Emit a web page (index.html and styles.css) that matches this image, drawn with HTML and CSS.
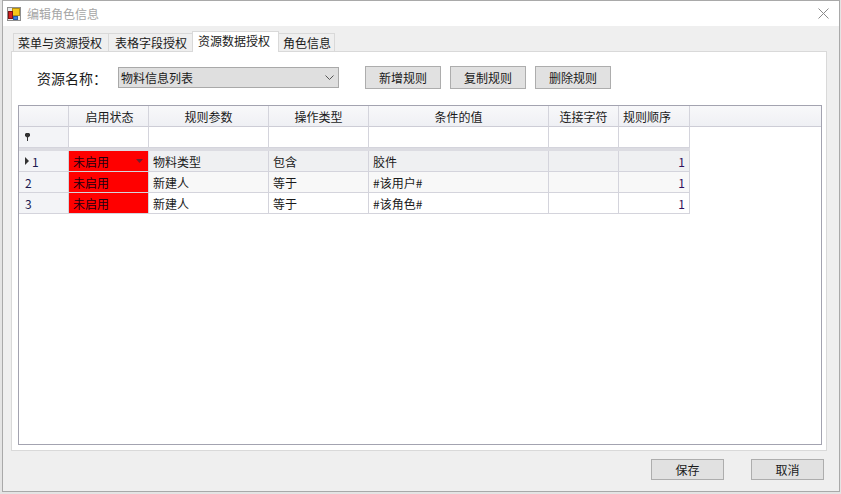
FILE: index.html
```html
<!DOCTYPE html>
<html lang="zh-CN">
<head>
<meta charset="utf-8">
<title>编辑角色信息</title>
<link rel="stylesheet" href="styles.css">
</head>
<body>
<div class="window">
  <header class="titlebar">
    <svg class="app-icon" width="14" height="14" viewBox="0 0 14 14">
      <rect x="0.5" y="0.5" width="13" height="13" fill="#e8e8e8" stroke="#8e8e8e"/>
      <rect x="5.5" y="1.5" width="7" height="7" fill="#f7c61a" stroke="#b48f10"/>
      <rect x="1.5" y="4.5" width="4" height="7" fill="#d62020" stroke="#7c1414"/>
      <rect x="6.5" y="9.5" width="4" height="3" fill="#3b7de0" stroke="#2a5aa8"/>
    </svg>
    <span class="title">编辑角色信息</span>
    <svg class="close" width="11" height="11" viewBox="0 0 11 11"><path d="M0.5 0.5L10.5 10.5M10.5 0.5L0.5 10.5" stroke="#8a8a8a" fill="none"/></svg>
  </header>
  <main class="client">
    <nav class="tabs">
      <span class="tab first">菜单与资源授权</span>
      <span class="tab second">表格字段授权</span>
      <span class="tab active">资源数据授权</span>
      <span class="tab last">角色信息</span>
    </nav>
    <section class="panel">
      <div class="toolbar">
        <label class="res-label">资源名称：</label>
        <div class="combo"><span>物料信息列表</span>
          <svg width="9" height="6" viewBox="0 0 9 6"><path d="M0.5 0.5L4.5 4.5L8.5 0.5" stroke="#555" fill="none"/></svg>
        </div>
        <button class="btn rule">新增规则</button>
        <button class="btn rule">复制规则</button>
        <button class="btn rule">删除规则</button>
      </div>
      <div class="grid">
        <div class="row head">
          <div class="c c0"></div><div class="c c1">启用状态</div><div class="c c2">规则参数</div><div class="c c3">操作类型</div><div class="c c4">条件的值</div><div class="c c5">连接字符</div><div class="c c6 h-left">规则顺序</div><div class="c rest"></div>
        </div>
        <div class="row filter">
          <div class="c c0"><svg width="5" height="8" viewBox="0 0 5 8"><path d="M1 0H4L5 1V3L3 4.5V8H2V4.5L0 3V1Z" fill="#333"/></svg></div><div class="c c1"></div><div class="c c2"></div><div class="c c3"></div><div class="c c4"></div><div class="c c5"></div><div class="c c6"></div>
        </div>
        <div class="row data current">
          <div class="c c0"><svg width="4" height="8" viewBox="0 0 4 8"><path d="M0 0L4 4L0 8Z" fill="#333"/></svg><span>1</span></div><div class="c c1 off">未启用<svg width="7" height="4" viewBox="0 0 7 4"><path d="M0 0H7L3.5 4Z" fill="#6a2030"/></svg></div><div class="c c2">物料类型</div><div class="c c3">包含</div><div class="c c4">胶件</div><div class="c c5"></div><div class="c c6 num">1</div>
        </div>
        <div class="row data alt">
          <div class="c c0"><span>2</span></div><div class="c c1 off">未启用</div><div class="c c2">新建人</div><div class="c c3">等于</div><div class="c c4">#该用户#</div><div class="c c5"></div><div class="c c6 num">1</div>
        </div>
        <div class="row data">
          <div class="c c0"><span>3</span></div><div class="c c1 off">未启用</div><div class="c c2">新建人</div><div class="c c3">等于</div><div class="c c4">#该角色#</div><div class="c c5"></div><div class="c c6 num">1</div>
        </div>
      </div>
    </section>
    <footer class="footer">
      <button class="btn act">保存</button>
      <button class="btn act">取消</button>
    </footer>
  </main>
</div>
</body>
</html>
```
FILE: styles.css
```css
* { box-sizing: border-box; }
html, body { margin: 0; padding: 0; }
body {
  width: 841px; height: 494px; background: #e4e4e4; overflow: hidden;
  font-family: "Noto Sans CJK SC", "Liberation Sans", sans-serif;
  font-size: 12px; color: #1a1a1a;
}
.window {
  width: 838px; height: 492px; margin-left: 2px;
  border: 1px solid #a9a9a9; display: flex; flex-direction: column; background: #efefef;
}
.titlebar { height: 25px; background: #fff; display: flex; align-items: center; padding: 0 10px 0 4px; flex: none; }
.app-icon { flex: none; }
.title { margin-left: 6px; color: #a6a6a6; font-size: 12px; flex: 1; }
.client { flex: 1; display: flex; flex-direction: column; padding: 5px 12px 0 8px; min-height: 0; }
.tabs { display: flex; height: 20px; align-items: flex-end; flex: none; padding-left: 2px; }
.tab {
  height: 18px; padding: 0 5px; line-height: 17px; background: #efefef;
  border: 1px solid #d9d9d9; border-bottom: 0; margin-right: -1px; white-space: nowrap;
}
.tab.first { padding: 0 6px 0 4px; }
.tab.second { padding: 0 5px 0 6px; }
.tab.last { padding: 0 3px 0 4px; }
.tab.active { height: 21px; background: #fff; margin-bottom: -1px; padding: 0 8px 0 5px; line-height: 18px; position: relative; }
.panel {
  height: 400px; flex: none; background: #fff; border: 1px solid #d9d9d9;
  padding: 0 4px 5px 6px; display: flex; flex-direction: column;
}
.toolbar { display: flex; align-items: center; height: 53px; flex: none; padding: 0 0 2px 19px; }
.res-label { font-size: 14px; width: 81px; white-space: nowrap; }
.combo {
  width: 221px; height: 21px; background: #dfdfdf; border: 1px solid #a9a9a9;
  display: flex; align-items: center; justify-content: space-between; padding: 0 4px 0 2px;
}
.btn {
  font: inherit; color: #1a1a1a; background: #e1e1e1; border: 1px solid #adadad; padding: 0;
}
.rule { width: 76px; height: 23px; margin-right: 9px; }
.rule:first-of-type { margin-left: 26px; }
.grid { flex: 1; border: 1px solid #a3a3b0; background: #fff; min-height: 0; }
.row { display: flex; }
.c {
  border-right: 1px solid #d4d4dc; border-bottom: 1px solid #d4d4dc;
  display: flex; align-items: center; padding: 0 4px; white-space: nowrap; flex: none;
}
.c0 { width: 50px; background: #f3f4f7; padding-left: 6px; gap: 3px; color: #1a1a50; }
.c1 { width: 80px; } .c2 { width: 120px; } .c3 { width: 100px; } .c4 { width: 180px; } .c5 { width: 70px; } .c6 { width: 71px; }
.rest { flex: 1; border-right: 0; }
.head { height: 21px; }
.head .c { background: linear-gradient(#f8f8fa, #eff0f4); justify-content: center; border-bottom-color: #cdcdd6; }
.head .c1 { padding-left: 5px; padding-right: 3px; }
.head .h-left { justify-content: flex-start; }
.filter { height: 24px; width: fit-content; border-bottom: 3px solid #dcdce2; }
.data { height: 21px; }
.current .c:not(.c0):not(.off) { background: #eff0f2; }
.alt .c:not(.c0):not(.off) { background: #f8f8f8; }
.off { background: #ff0000; color: #200010; justify-content: space-between; padding-right: 5px; }
.num { justify-content: flex-end; color: #30105a; }
.footer { flex: 1; display: flex; justify-content: flex-end; align-items: flex-start; padding: 8px 3px 0 0; gap: 27px; }
.act { width: 73px; height: 21px; }
```
